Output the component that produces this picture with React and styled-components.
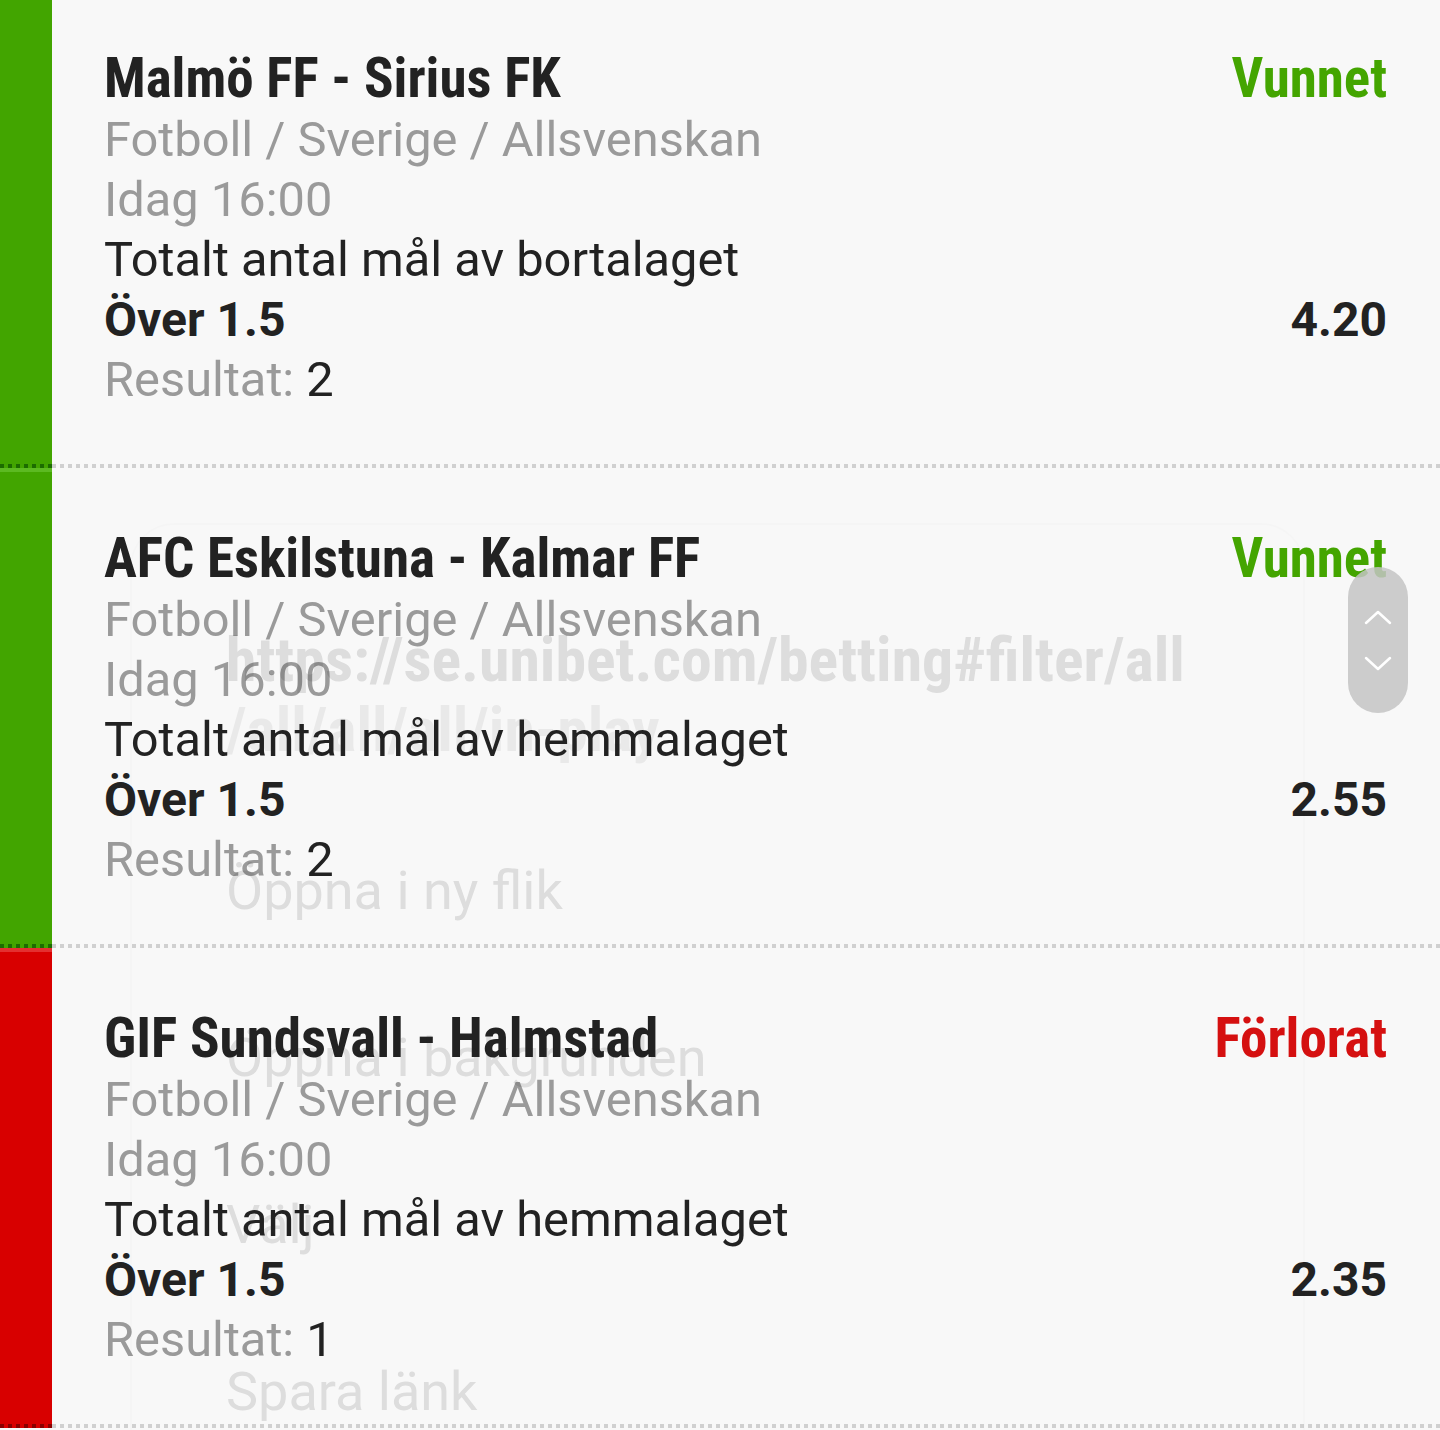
import React from "react";
import styled, { createGlobalStyle } from "styled-components";

const GlobalStyle = createGlobalStyle`
  html, body { margin: 0; padding: 0; background: #f8f8f8; }
  body { font-family: Roboto, "Noto Sans", "Liberation Sans", sans-serif; -webkit-font-smoothing: antialiased; }
`;

const Page = styled.div`
  position: relative;
  width: 1440px;
  height: 1430px;
  overflow: hidden;
  background: #f8f8f8;
`;

const List = styled.div`
  display: flex;
  flex-direction: column;
  margin-top: -12px;
`;

const Card = styled.div`
  display: grid;
  grid-template-columns: 52px 1fr;
`;

const Strip = styled.div`
  background:
    repeating-linear-gradient(90deg, ${(p) => p.$dot} 0 4px, transparent 4px 8px) left bottom / 100% 4px no-repeat,
    linear-gradient(${(p) => p.$light}, ${(p) => p.$light}) left top / 100% 4px no-repeat,
    ${(p) => p.$color};
`;

const Body = styled.div`
  padding: 60px 53px 60px 52px;
  background: repeating-linear-gradient(90deg, #d0d0d0 0 4px, transparent 4px 8px) left bottom / 100% 4px no-repeat;
`;

const Row = styled.div`
  display: flex;
  justify-content: space-between;
  align-items: flex-start;
  height: 60px;
  white-space: nowrap;
`;

const Title = styled.span`
  font-family: "Roboto Condensed", Roboto, sans-serif;
  font-weight: 700;
  font-size: 55px;
  line-height: 60px;
  color: #222222;
`;

const Status = styled.span`
  font-family: "Roboto Condensed", Roboto, sans-serif;
  font-weight: 700;
  font-size: 55px;
  line-height: 60px;
  color: ${(p) => p.$color};
`;

const Meta = styled.span`
  font-size: 48.8px;
  line-height: 64px;
  color: #9a9a9a;
`;

const Market = styled.span`
  font-size: 48.8px;
  line-height: 64px;
  color: #222222;
`;

const Strong = styled.span`
  font-size: 48px;
  line-height: 64px;
  font-weight: 700;
  color: #222222;
`;

const ResultValue = styled.span`
  color: #222222;
`;

const Ghost = styled.div`
  position: absolute;
  left: 130px;
  right: 135px;
  top: 523px;
  bottom: -60px;
  border: 2px solid rgba(0, 0, 0, 0.012);
  border-radius: 44px 44px 0 0;
  padding: 100px 0 0 94px;
  pointer-events: none;
  display: flex;
  flex-direction: column;
`;

const GhostUrl = styled.div`
  font-family: "Roboto Condensed", Roboto, sans-serif;
  font-weight: 700;
  font-size: 61.8px;
  line-height: 70px;
  color: rgba(40, 40, 40, ${(p) => p.$alpha});
  white-space: nowrap;
`;

const GhostList = styled.div`
  margin-top: 42px;
  display: flex;
  flex-direction: column;
`;

const GhostItem = styled.div`
  font-size: 54px;
  height: 167px;
  line-height: 167px;
  color: rgba(40, 40, 40, 0.13);
  white-space: nowrap;
`;

const Scroller = styled.div`
  position: absolute;
  left: 1348px;
  top: 567px;
  width: 60px;
  height: 146px;
  border-radius: 30px;
  background: rgba(196, 196, 196, 0.85);
  display: flex;
  flex-direction: column;
  align-items: center;
  justify-content: center;
  gap: 31px;
`;

const Chevron = ({ up }) => (
  <svg width="30" height="16" viewBox="0 0 30 16" fill="none">
    <path
      d={up ? "M3 14 L15 3 L27 14" : "M3 2 L15 13 L27 2"}
      stroke="#ffffff"
      strokeWidth="2.5"
      strokeLinecap="round"
      strokeLinejoin="round"
    />
  </svg>
);

const GREEN = { color: "#42a500", light: "#5cba22", dot: "#1c6c00", text: "#44a500" };
const RED = { color: "#d80000", light: "#e43030", dot: "#8a0000", text: "#d51010" };

const bets = [
  { match: "Malmö FF - Sirius FK", status: "Vunnet", theme: GREEN, market: "Totalt antal mål av bortalaget", odds: "4.20", result: "2" },
  { match: "AFC Eskilstuna - Kalmar FF", status: "Vunnet", theme: GREEN, market: "Totalt antal mål av hemmalaget", odds: "2.55", result: "2" },
  { match: "GIF Sundsvall - Halmstad", status: "Förlorat", theme: RED, market: "Totalt antal mål av hemmalaget", odds: "2.35", result: "1" },
];

export default function App() {
  return (
    <Page>
      <GlobalStyle />
      <List>
        {bets.map((b) => (
          <Card key={b.match}>
            <Strip $color={b.theme.color} $light={b.theme.light} $dot={b.theme.dot} />
            <Body>
              <Row>
                <Title>{b.match}</Title>
                <Status $color={b.theme.text}>{b.status}</Status>
              </Row>
              <Row>
                <Meta>Fotboll / Sverige / Allsvenskan</Meta>
              </Row>
              <Row>
                <Meta>Idag 16:00</Meta>
              </Row>
              <Row>
                <Market>{b.market}</Market>
              </Row>
              <Row>
                <Strong>Över 1.5</Strong>
                <Strong>{b.odds}</Strong>
              </Row>
              <Row>
                <Meta>
                  Resultat: <ResultValue>{b.result}</ResultValue>
                </Meta>
              </Row>
            </Body>
          </Card>
        ))}
      </List>
      <Ghost>
        <GhostUrl $alpha={0.13}>https://se.unibet.com/betting#filter/all</GhostUrl>
        <GhostUrl $alpha={0.07}>/all/all/all/in-play</GhostUrl>
        <GhostList>
          <GhostItem>Öppna i ny flik</GhostItem>
          <GhostItem>Öppna i bakgrunden</GhostItem>
          <GhostItem>Välj</GhostItem>
          <GhostItem>Spara länk</GhostItem>
        </GhostList>
      </Ghost>
      <Scroller>
        <Chevron up />
        <Chevron />
      </Scroller>
    </Page>
  );
}
